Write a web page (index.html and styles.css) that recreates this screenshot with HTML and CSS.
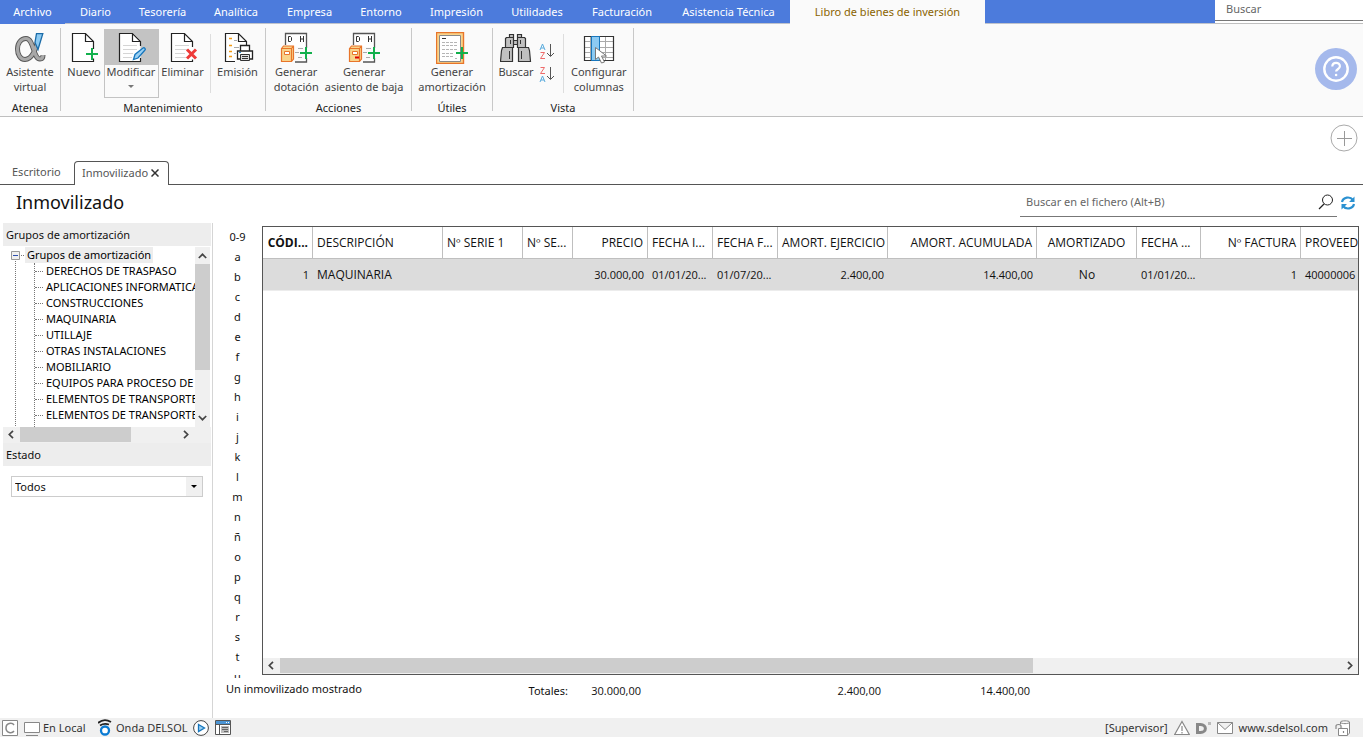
FILE: index.html
```html
<!DOCTYPE html>
<html lang="es">
<head>
<meta charset="utf-8">
<title>Inmovilizado</title>
<link rel="stylesheet" href="styles.css">
</head>
<body>
<div class="app">
  <header class="menubar">
    <nav class="menu">
      <button class="menu-item first">Archivo</button>
      <button class="menu-item">Diario</button>
      <button class="menu-item">Tesorería</button>
      <button class="menu-item">Analítica</button>
      <button class="menu-item">Empresa</button>
      <button class="menu-item">Entorno</button>
      <button class="menu-item">Impresión</button>
      <button class="menu-item">Utilidades</button>
      <button class="menu-item">Facturación</button>
      <button class="menu-item">Asistencia Técnica</button>
      <button class="menu-item active">Libro de bienes de inversión</button>
    </nav>
    <div class="menu-fill"></div>
    <div class="menu-search"><input type="text" placeholder="Buscar" aria-label="Buscar"></div>
  </header>

  <section class="ribbon">
    <div class="group g-atenea">
      <div class="tools">
        <button class="tool">
          <svg width="32" height="32" viewBox="0 0 32 32"><path d="M24.500 7C22 15 19 27.500 11 27.500C6 27.500 3.500 22 3.500 17C3.500 11 7 6.500 12 6.500C20 6.500 19 27 26 27C28.500 27 29 25 29 23" fill="none" stroke="#555" stroke-width="5"/><path d="M24.500 7C22 15 19 27.500 11 27.500C6 27.500 3.500 22 3.500 17C3.500 11 7 6.500 12 6.500C20 6.500 19 27 26 27C28.500 27 29 25 29 23" fill="none" stroke="#a8a8a8" stroke-width="3.200"/><path d="M22.500 1.700h6.300L24 17.500l-3-7z" fill="#8ccaf2" stroke="#1c6ca8" stroke-width="1.300"/></svg>
          <span>Asistente<br>virtual</span>
        </button>
      </div>
      <div class="caption">Atenea</div>
    </div>

    <div class="group g-mant">
      <div class="tools">
        <button class="tool">
          <svg width="32" height="32" viewBox="0 0 32 32"><path d="M4.500 1.500h14l7 7v21h-21z" fill="#fff"/><path d="M25.500 17V9.500l-8-8h-13v28h21v-3M17.500 1.500v8h8" fill="none" stroke="#222" stroke-width="1.200"/><path d="M18 22h12M24 16v12" stroke="#12b04c" stroke-width="2"/></svg>
          <span>Nuevo</span>
        </button>
        <button class="tool selected">
          <svg width="32" height="32" viewBox="0 0 32 32"><path d="M4.500 1.500h14l7 7v21h-21z" fill="#fff"/><path d="M25.500 14V9.500l-8-8h-13v28h21V26M17.500 1.500v8h8" fill="none" stroke="#222" stroke-width="1.200"/><path d="M8 13.500h14M8 17.500h14M8 21.500h10M8 25.500h9" stroke="#d5d5d5"/><path d="M18.500 27.500l1.500-5 8-6.500c1.500-.8 3 1 2 2L23 26z" fill="#9ad0f3" stroke="#1676bd" stroke-width="1.300"/></svg>
          <span>Modificar</span><i class="arrow"></i>
        </button>
        <button class="tool">
          <svg width="32" height="32" viewBox="0 0 32 32"><path d="M4.500 1.500h14l7 7v21h-21z" fill="#fff"/><path d="M25.500 15V9.500l-8-8h-13v28h21v-2M17.500 1.500v8h8" fill="none" stroke="#222" stroke-width="1.200"/><path d="M8 13.500h14M8 17.500h12M8 21.500h10M8 25.500h11" stroke="#d5d5d5"/><path d="M20 17.500l9 9M29 17.500l-9 9" stroke="#ee3a38" stroke-width="3"/></svg>
          <span>Eliminar</span>
        </button>
        <div class="divider"></div>
        <button class="tool">
          <svg width="32" height="32" viewBox="0 0 32 32"><path d="M13 29.500H3.500v-28h13l8 8V13M16.500 1.500v8h8" fill="#fff" stroke="#222" stroke-width="1.200"/><path d="M7 6.500h3M7 13.500h3M7 19.500h3M7 24.500h3" stroke="#f39a12" stroke-width="1.500"/><path d="M12 8.500h3M12 15.500h5M12 21.500h2" stroke="#aaa"/><path d="M18.500 19v-5.500h9V19M18 27h-2.500v-8h15v8H28" fill="#fff" stroke="#222" stroke-width="1.300"/><path d="M18.500 22.500h9v6h-9zM20 24.500h6M20 26.500h6" fill="#ddd" stroke="#333"/><path d="M17 20.500h2" stroke="#2b91d1"/></svg>
          <span>Emisión</span>
        </button>
      </div>
      <div class="caption">Mantenimiento</div>
    </div>

    <div class="group g-acc">
      <div class="tools">
        <button class="tool">
          <svg width="32" height="32" viewBox="0 0 32 32"><path d="M5.500 13V1.500h21V16M26.500 26v4H15" fill="#fff" stroke="#555" stroke-width="1.300"/><path d="M8.500 4.500v5h2l1-1v-3l-1-1zM20.500 4v6M23.500 4v6M20.500 7h3" fill="none" stroke="#333"/><path d="M18 16.500h5M15 20.500h4M18 25.500h4" stroke="#aaa"/><path d="M1.500 16.500l2-2.500h10v13l-2 2.500H1.500zM1.500 16.500h10v13M11.500 16.500l2-2.500" fill="#f9d48b" stroke="#e8752a" stroke-width="1.200"/><path d="M4.500 19.500h5v3h-5z" fill="#fff" stroke="#e8752a"/><path d="M20 21h12M26 15v12" stroke="#12b04c" stroke-width="2"/></svg>
          <span>Generar<br>dotación</span>
        </button>
        <button class="tool">
          <svg width="32" height="32" viewBox="0 0 32 32"><path d="M5.500 13V1.500h21V16M26.500 26v4H15" fill="#fff" stroke="#555" stroke-width="1.300"/><path d="M8.500 4.500v5h2l1-1v-3l-1-1zM20.500 4v6M23.500 4v6M20.500 7h3" fill="none" stroke="#333"/><path d="M18 16.500h5M15 20.500h4M18 25.500h4" stroke="#aaa"/><path d="M1.500 16.500l2-2.500h10v13l-2 2.500H1.500zM1.500 16.500h10v13M11.500 16.500l2-2.500" fill="#f9d48b" stroke="#e8752a" stroke-width="1.200"/><path d="M4.500 19.500h5v3h-5z" fill="#fff" stroke="#e8752a"/><path d="M7 25.500h4" stroke="#d00" stroke-width="2"/><path d="M20 21h12M26 15v12" stroke="#12b04c" stroke-width="2"/></svg>
          <span>Generar<br>asiento de baja</span>
        </button>
      </div>
      <div class="caption">Acciones</div>
    </div>

    <div class="group g-util">
      <div class="tools">
        <button class="tool">
          <svg width="32" height="32" viewBox="0 0 32 32"><path d="M.5.500h27v31H.5z" fill="#f9d48b" stroke="#e8752a" stroke-width="1.400"/><path d="M3.500 3.500h21v26h-21z" fill="#fff" stroke="#888"/><path d="M6 6.500h4" stroke="#333"/><path d="M6 10.500h16M6 13.500h16M6 17.500h16M6 21.500h12M6 24.500h12M19 26.500h2" stroke="#b5b5b5" stroke-dasharray="3 1"/><path d="M20 21h12M26 15v12" stroke="#12b04c" stroke-width="2"/></svg>
          <span>Generar<br>amortización</span>
        </button>
      </div>
      <div class="caption">Útiles</div>
    </div>

    <div class="group g-vista">
      <div class="tools">
        <button class="tool">
          <svg width="32" height="32" viewBox="0 0 32 32"><g fill="#c0c0c0" stroke="#333" stroke-width="1.200"><path d="M9.500 2.500h4v3h-4zM17.500 2.500h4v3h-4zM5.500 6.500l1-1h7v10h-8zM17.500 5.500h7l1 1v9h-8zM13.500 8.500h4v4h-4zM.5 29.500l1-11 1-3h10v14zM18.500 15.500h10l1 3 1 11h-12z"/></g><path d="M9.500 19v8M21.500 19v8M10.500 8v4M20.500 8v4" stroke="#333"/></svg>
          <span>Buscar</span>
        </button>
        <div class="sorts">
          <button aria-label="Orden ascendente"><svg width="16" height="17" viewBox="0 0 16 17"><path d="M1 7l2.500-6 2.500 6M2 5h3" fill="none" stroke="#58aadd"/><path d="M1.500 9.500h4l-4 6h4.500" fill="none" stroke="#ee6a6a"/><path d="M11.500 1v12M8 10l3.500 3.500L15 10" fill="none" stroke="#555"/></svg></button>
          <button aria-label="Orden descendente"><svg width="16" height="17" viewBox="0 0 16 17"><path d="M1.500 1.500h4l-4 6h4.500" fill="none" stroke="#ee6a6a"/><path d="M1 16l2.500-6 2.500 6M2 14h3" fill="none" stroke="#58aadd"/><path d="M11.500 1v12M8 10l3.500 3.500L15 10" fill="none" stroke="#555"/></svg></button>
        </div>
        <div class="divider"></div>
        <button class="tool">
          <svg width="32" height="32" viewBox="0 0 32 32"><path d="M1.500 4.500h29v24h-29z" fill="#fff"/><path d="M1.500 9.500h29M1.500 15.500h29M1.500 20.500h29M1.500 25.500h29M7.500 4v24M22.500 4v24" stroke="#aaa"/><path d="M1.500 4.500h29v24h-29z" fill="none" stroke="#333" stroke-width="1.200"/><path d="M8.500 4.500h8v24h-8z" fill="#8ccaf2" stroke="#1676bd"/><path d="M12.500 15.500v12l3-2.500 3 6 3-1-3-6h5z" fill="#fff" stroke="#777"/></svg>
          <span>Configurar<br>columnas</span>
        </button>
      </div>
      <div class="caption">Vista</div>
    </div>

    <button class="help" aria-label="Ayuda"><svg width="42" height="42" viewBox="0 0 42 42"><circle cx="21" cy="21" r="21" fill="#a5b9ec"/><circle cx="21" cy="21" r="11.700" fill="none" stroke="#fff" stroke-width="2.400"/><path d="M17.300 18.500c0-4.800 7.600-4.800 7.600-.3 0 3-3.800 3-3.800 5.300" fill="none" stroke="#fff" stroke-width="2.200"/><circle cx="21.100" cy="27" r="1.300" fill="#fff"/></svg></button>
  </section>

  <div class="tabstrip">
    <div class="tabs">
      <button class="tab">Escritorio</button>
      <button class="tab current">Inmovilizado <svg width="8" height="8" viewBox="0 0 8 8"><path d="M.5.500l7 7M7.500.500l-7 7" stroke="#333" stroke-width="1.500"/></svg></button>
    </div>
    <button class="add" aria-label="Añadir"><svg width="28" height="28" viewBox="0 0 28 28"><circle cx="14" cy="14" r="13" fill="none" stroke="#aaa"/><path d="M7 14.500h15M14.500 7v15" stroke="#999"/></svg></button>
  </div>

  <div class="titlebar">
    <h1>Inmovilizado</h1>
    <div class="filesearch">
      <input type="text" placeholder="Buscar en el fichero (Alt+B)" aria-label="Buscar en el fichero">
      <svg width="16" height="16" viewBox="0 0 16 16"><circle cx="9.500" cy="6" r="5" fill="none" stroke="#222"/><path d="M6 10l-5 5" stroke="#222" stroke-width="1.300"/></svg>
    </div>
    <button class="refresh" aria-label="Actualizar"><svg width="16" height="16" viewBox="0 0 16 16"><path d="M2 7c1-5 8-6 11-2M14 9c-1 5-8 6-11 2" fill="none" stroke="#2b91d1" stroke-width="2.200"/><path d="M14.500 1.500V7H9zM1.500 14.500V9H7z" fill="#2b91d1"/></svg></button>
  </div>

  <main class="content">
    <aside class="sidebar">
      <h2 class="side-head">Grupos de amortización</h2>
      <div class="treebox">
        <div class="tree">
          <div class="root"><svg width="9" height="9" viewBox="0 0 9 9"><path d="M.5.500h8v8h-8z" fill="#f0f0f0" stroke="#999"/><path d="M2 4.500h5" stroke="#2d4fae"/></svg><i class="dots"></i><span>Grupos de amortización</span></div>
          <ul>
            <li>DERECHOS DE TRASPASO</li>
            <li>APLICACIONES INFORMATICA</li>
            <li>CONSTRUCCIONES</li>
            <li>MAQUINARIA</li>
            <li>UTILLAJE</li>
            <li>OTRAS INSTALACIONES</li>
            <li>MOBILIARIO</li>
            <li>EQUIPOS PARA PROCESO DE</li>
            <li>ELEMENTOS DE TRANSPORTE</li>
            <li>ELEMENTOS DE TRANSPORTE</li>
          </ul>
        </div>
        <div class="vscroll">
          <svg class="chev" width="9" height="6" viewBox="0 0 9 6"><path d="M.8 5l3.700-3.700L8.200 5" fill="none" stroke="#444" stroke-width="1.700"/></svg>
          <div class="vthumb"></div>
          <svg class="chev" width="9" height="6" viewBox="0 0 9 6"><path d="M.8 1l3.700 3.700L8.200 1" fill="none" stroke="#444" stroke-width="1.700"/></svg>
        </div>
      </div>
      <div class="hscroll side">
        <svg class="chev" width="6" height="9" viewBox="0 0 6 9"><path d="M5 .8L1.300 4.500 5 8.200" fill="none" stroke="#444" stroke-width="1.700"/></svg>
        <div class="track"><div class="thumb"></div></div>
        <svg class="chev" width="6" height="9" viewBox="0 0 6 9"><path d="M1 .8l3.700 3.700L1 8.200" fill="none" stroke="#444" stroke-width="1.700"/></svg>
      </div>
      <h2 class="side-head"><label for="estado">Estado</label></h2>
      <div class="combo">
        <select id="estado"><option>Todos</option></select>
        <span class="combo-btn"></span>
      </div>
    </aside>

    <section class="work">
      <div class="listing">
        <div class="alphabet">
          <button>0-9</button><button>a</button><button>b</button><button>c</button><button>d</button><button>e</button><button>f</button><button>g</button><button>h</button><button>i</button><button>j</button><button>k</button><button>l</button><button>m</button><button>n</button><button>ñ</button><button>o</button><button>p</button><button>q</button><button>r</button><button>s</button><button>t</button><button>u</button>
        </div>
        <div class="gridbox">
          <div class="gridview">
            <table>
              <colgroup><col class="w50"><col class="w130"><col class="w80"><col class="w50"><col class="w75"><col class="w65"><col class="w65"><col class="w110"><col class="w149"><col class="w100"><col class="w64"><col class="w100"><col class="w80"></colgroup>
              <thead>
                <tr><th class="num code">CÓDI...</th><th>DESCRIPCIÓN</th><th>Nº SERIE 1</th><th>Nº SE...</th><th class="num">PRECIO</th><th>FECHA I...</th><th>FECHA F...</th><th class="num">AMORT. EJERCICIO</th><th class="num">AMORT. ACUMULADA</th><th class="mid">AMORTIZADO</th><th>FECHA ...</th><th class="num">Nº FACTURA</th><th>PROVEEDOR</th></tr>
              </thead>
              <tbody>
                <tr><td class="num">1</td><td class="name">MAQUINARIA</td><td></td><td></td><td class="num">30.000,00</td><td>01/01/20...</td><td>01/07/20...</td><td class="num">2.400,00</td><td class="num">14.400,00</td><td class="mid name">No</td><td>01/01/20...</td><td class="num">1</td><td>40000006</td></tr>
              </tbody>
            </table>
          </div>
          <div class="hscroll">
            <svg class="chev" width="6" height="9" viewBox="0 0 6 9"><path d="M5 .8L1.300 4.500 5 8.200" fill="none" stroke="#444" stroke-width="1.700"/></svg>
            <div class="track"><div class="thumb"></div></div>
            <svg class="chev" width="6" height="9" viewBox="0 0 6 9"><path d="M1 .8l3.700 3.700L1 8.200" fill="none" stroke="#444" stroke-width="1.700"/></svg>
          </div>
        </div>
      </div>
      <div class="totals">
        <span class="count">Un inmovilizado mostrado</span>
        <span>Totales:</span>
        <span class="sum">30.000,00</span>
        <span class="sum">2.400,00</span>
        <span class="sum">14.400,00</span>
      </div>
    </section>
  </main>

  <footer class="status">
    <svg width="16" height="16" viewBox="0 0 16 16"><path d="M.5.500h15v15H.5z" fill="#fff" stroke="#888"/><path d="M12 5c-2-3-8-2-8 3s6 6 8 3" fill="none" stroke="#888" stroke-width="1.500"/></svg>
    <svg class="pc" width="16" height="16" viewBox="0 0 16 16"><path d="M.5 2.500h15v10H.5z" fill="#fff" stroke="#888"/><path d="M2 15.500h12" stroke="#888"/></svg>
    <span class="local">En Local</span>
    <svg class="onda" width="14" height="17" viewBox="0 0 14 17"><path d="M0 4C4 .5 9 .5 13 3M2 6.500c3-2 6-2 9-1" fill="none" stroke="#222" stroke-width="1.800"/><circle cx="7" cy="11.500" r="4" fill="#fff" stroke="#0b7bd3" stroke-width="2.300"/></svg>
    <span class="onda-text">Onda DELSOL</span>
    <svg width="16" height="16" viewBox="0 0 16 16"><circle cx="8" cy="8" r="7.400" fill="#fff" stroke="#444"/><path d="M5.500 4.500l6 3.500-6 3.500z" fill="#9ad0f3" stroke="#1676bd" stroke-width="1.300"/></svg>
    <svg class="win" width="16" height="15" viewBox="0 0 16 15"><path d="M.5.500h15v14H.5z" fill="#fff" stroke="#555"/><path d="M1 1h14v3H1z" fill="#4a94d4"/><path d="M1 4.500h14M4.500 5v9" stroke="#555"/><path d="M6 6h8v7H6z" fill="#bbb"/><path d="M7 7.500h6M7 9.500h6M9 11.500h4" stroke="#666"/><path d="M11 2.500h3" stroke="#fff" stroke-dasharray="1 1"/></svg>
    <span class="user">[Supervisor]</span>
    <svg width="16" height="16" viewBox="0 0 16 16"><path d="M8 1.500L15.300 14.500H.7z" fill="#fff" stroke="#888" stroke-width="1.200"/><path d="M8 6v5M8 12v1.500" stroke="#888" stroke-width="1.200"/></svg>
    <svg class="dlogo" width="17" height="14" viewBox="0 0 17 14"><path d="M2.500 3.500h3c6.500 0 6.500 8 0 8h-3z" fill="none" stroke="#888" stroke-width="3"/><path d="M13 1h3v3h-3z" fill="#bbb"/></svg>
    <svg width="16" height="12" viewBox="0 0 16 12"><path d="M.5.500h15v11H.5zL8 7.500l7.500-7" fill="#fff" stroke="#888"/></svg>
    <a href="#" class="site">www.sdelsol.com</a>
    <svg width="16" height="16" viewBox="0 0 16 16"><path d="M5.500 4V2c0-1.500 9-1.500 9 0v11c0 .8-1 1.200-2 1.500M5.500 2.500c1 1.500 8 1.500 9 0" fill="#fff" stroke="#888"/><path d="M3.500 8.500h9v7h-9z" fill="#fff" stroke="#888"/><path d="M1 9V6c0-2 5-2 5 0v2M8.500 11v2" fill="none" stroke="#888" stroke-width="1.200"/></svg>
  </footer>
</div>
</body>
</html>
```
FILE: styles.css
```css
* { box-sizing: border-box; }
body { margin: 0; background: #fff; color: #111; font: 11px/15px "Noto Sans", "Open Sans", sans-serif; }
button, input, select { font: inherit; color: inherit; margin: 0; padding: 0; border: 0; background: none; }
svg { display: block; flex: none; }
h1, h2, ul { margin: 0; padding: 0; font-weight: 400; }
.app { display: flex; flex-direction: column; height: 100vh; overflow: hidden; }

/* Menu bar */
.menubar { display: flex; flex: none; height: 24px; background: #4c7bdc; }
.menu { display: grid; grid-template-columns: 65px 61px 73px 74px 73px 70px 81px 80px 90px 123px 195px; }
.menu-item { color: #fff; border-bottom: 1px solid #bfc3cc; white-space: nowrap; }
.menu-item.first { border-bottom-color: #4c7bdc; }
.menu-item.active { background: #fafafa; color: #8a6400; border-bottom-color: #fafafa; }
.menu-fill { flex: 1; border-bottom: 1px solid #bfc3cc; }
.menu-search { width: 148px; background: #fff; border-bottom: 1px solid #bfbfbf; }
.menu-search input { display: block; width: 100%; height: 21px; padding: 0 11px 3px; border-bottom: 1px solid #777; outline: 0; }
input::placeholder { color: #666; opacity: 1; }

/* Ribbon */
.ribbon { display: flex; flex: none; height: 93px; padding: 4px 7px 5px 0; background: #fafafa; border-bottom: 1px solid #bfbfbf; }
.group { display: flex; flex-direction: column; border-right: 1px solid #c8c8c8; }
.tools { display: flex; flex: 1; justify-content: center; padding-top: 1px; }
.tool { display: flex; flex-direction: column; align-items: center; height: 69px; padding-top: 3px; color: #444; white-space: nowrap; }
.caption { height: 10px; line-height: 14px; text-align: center; color: #222; }
.divider { width: 1px; height: 59px; margin: 5px 3px 0; background: #ddd; }
.g-atenea { width: 61px; }
.g-mant { width: 205px; }
.g-mant .tool { width: 48px; }
.g-mant .tool:first-child { width: 39px; }
.g-mant .tool.selected { width: 55px; border: 1px solid #c3c3c3; padding-top: 2px; background: linear-gradient(#c3c3c3 35px, #fafafa 35px); }
.arrow { margin-top: 6px; border: 3px solid transparent; border-top-color: #777; }
.g-acc { width: 146px; }
.g-acc .tools { gap: 6px; }
.g-util { width: 81px; }
.g-vista { width: 141px; }
.g-vista .tool:first-child { width: 38px; }
.g-vista .tools { justify-content: flex-start; padding-left: 4px; }
.g-vista .divider { margin: 5px 7px 0 8px; }
.sorts { display: flex; flex-direction: column; gap: 6px; padding: 14px 0 0 4px; }
.sorts button { height: 17px; }
.help { align-self: flex-start; margin: 20px -1px 0 auto; }

/* Document tabs */
.tabstrip { display: flex; flex: none; align-items: flex-start; justify-content: space-between; height: 68px; padding: 7px 5px 0 0; border-bottom: 1px solid #555; }
.tabs { display: flex; align-self: flex-end; margin-bottom: -1px; }
.tab { height: 24px; width: 74px; padding: 0 0 3px 12px; color: #555; text-align: left; }
.tab.current { display: flex; align-items: center; gap: 3px; width: 95px; padding: 0 0 2px 7px; background: #fff; border: 1px solid #555; border-bottom: 0; border-radius: 4px 4px 0 0; }

/* Title row */
.titlebar { display: flex; flex: none; height: 38px; padding: 2px 7px 0 16px; }
h1 { flex: 1; font-size: 18px; line-height: 30px; color: #111; }
.filesearch { display: flex; align-items: center; width: 317px; height: 30px; padding: 0 3px 0 6px; border-bottom: 1px solid #777; }
.filesearch input { flex: 1; outline: 0; }
.refresh { align-self: flex-start; margin: 8px 0 0 3px; }

.content { display: flex; flex: 1; min-height: 0; }

/* Side panel */
.sidebar { flex: none; width: 213px; padding: 0 1px 0 3px; border-right: 1px solid #d5d5d5; }
.side-head { height: 23px; padding-left: 3px; background: #ededed; font-size: 11px; line-height: 23px; }
.treebox { display: flex; height: 181px; padding-top: 1px; }
.tree { flex: 1; overflow: hidden; white-space: nowrap; color: #000; line-height: 16px; background: repeating-linear-gradient(#777 0 1px, transparent 1px 2px) 12px 12px / 1px 100% no-repeat; }
.root { display: flex; align-items: center; height: 16px; padding-left: 8px; }
.root svg { background: #fff; }
.root span { padding: 0 2px; background: #ededed; }
.dots { width: 3px; margin: 0 1px; border-top: 1px dotted #777; }
.tree ul { margin-left: 31px; list-style: none; height: 170px; border-left: 1px dotted #777; }
.tree li { display: flex; align-items: center; height: 16px; }
.tree li::before { content: ""; flex: none; width: 8px; margin-right: 3px; border-top: 1px dotted #777; }
.vscroll { display: flex; flex: none; flex-direction: column; align-items: center; width: 15px; margin-right: 1px; padding: 6px 0; background: #f0f0f0; }
.vthumb { width: 15px; height: 106px; margin: 5px 0 auto; background: #cdcdcd; }
.hscroll { display: flex; flex: none; align-items: center; height: 16px; padding: 0 5px 1px; background: #f0f0f0; }
.hscroll .track { flex: 1; height: 15px; margin: 0 6px; }
.thumb { height: 15px; width: 71%; background: #cdcdcd; }
.hscroll.side { padding-right: 22px; }
.combo { position: relative; margin: 10px 8px 0; height: 21px; border: 1px solid #ccc; }
.combo select { width: 100%; height: 19px; padding-left: 3px; appearance: none; outline: 0; }
.combo-btn { position: absolute; top: 0; right: 0; display: flex; align-items: center; justify-content: center; width: 16px; height: 19px; background: #f0f0f0; pointer-events: none; }
.combo-btn::before { content: ""; margin-top: 3px; border: 3px solid transparent; border-top-color: #000; }

/* Listing */
.work { display: flex; flex-direction: column; flex: 1; min-width: 0; }
.listing { display: flex; flex: 1; min-height: 0; }
.alphabet { display: flex; flex-direction: column; width: 49px; padding-top: 3px; overflow: hidden; }
.alphabet button { flex: none; height: 20px; }
.gridbox { display: flex; flex-direction: column; flex: 1; min-width: 0; margin: 3px 4px 3px 0; border: 1px solid #555; }
.gridview { flex: 1; overflow: hidden; font-family: "Open Sans", sans-serif; }
table { width: 1118px; table-layout: fixed; border-collapse: separate; border-spacing: 0; font-size: 11px; }
th, td { height: 32px; padding: 0 0 0 4px; font-weight: 400; text-align: left; white-space: nowrap; overflow: hidden; border-bottom: 1px solid #bfbfbf; }
th { border-right: 1px solid #bfbfbf; font-size: 12px; }
td { background: #dcdcdc; border-bottom: 1px solid #ececec; }
.name { font-size: 12px; }
.num { padding-right: 4px; text-align: right; }
.mid { padding: 0; text-align: center; }
.code { padding-left: 0; font-weight: 700; }
.w50 { width: 50px; } .w130 { width: 130px; } .w80 { width: 80px; } .w75 { width: 75px; } .w65 { width: 65px; }
.w110 { width: 110px; } .w149 { width: 149px; } .w100 { width: 100px; } .w64 { width: 64px; }
.totals { display: grid; grid-template-columns: 254px 88px 73px 240px 149px; flex: none; height: 40px; padding: 3px 0 0 13px; line-height: 19px; text-align: right; }
.totals .count { text-align: left; line-height: 15px; }
.totals .sum { font-family: "Open Sans", sans-serif; }

/* Status bar */
.status { display: flex; flex: none; align-items: center; height: 19px; padding: 0 12px 0 2px; background: #f0f0f0; color: #333; }
.pc { margin-left: 6px; }
.local { width: 54px; margin-left: 3px; }
.onda { margin-left: 1px; }
.onda-text { width: 74px; margin: 0 3px 0 4px; }
.win { margin-left: 6px; }
.user { margin: 0 6px 0 auto; }
.dlogo { margin: 0 5px; }
.site { margin: 0 7px 0 6px; color: #333; text-decoration: none; }
```
